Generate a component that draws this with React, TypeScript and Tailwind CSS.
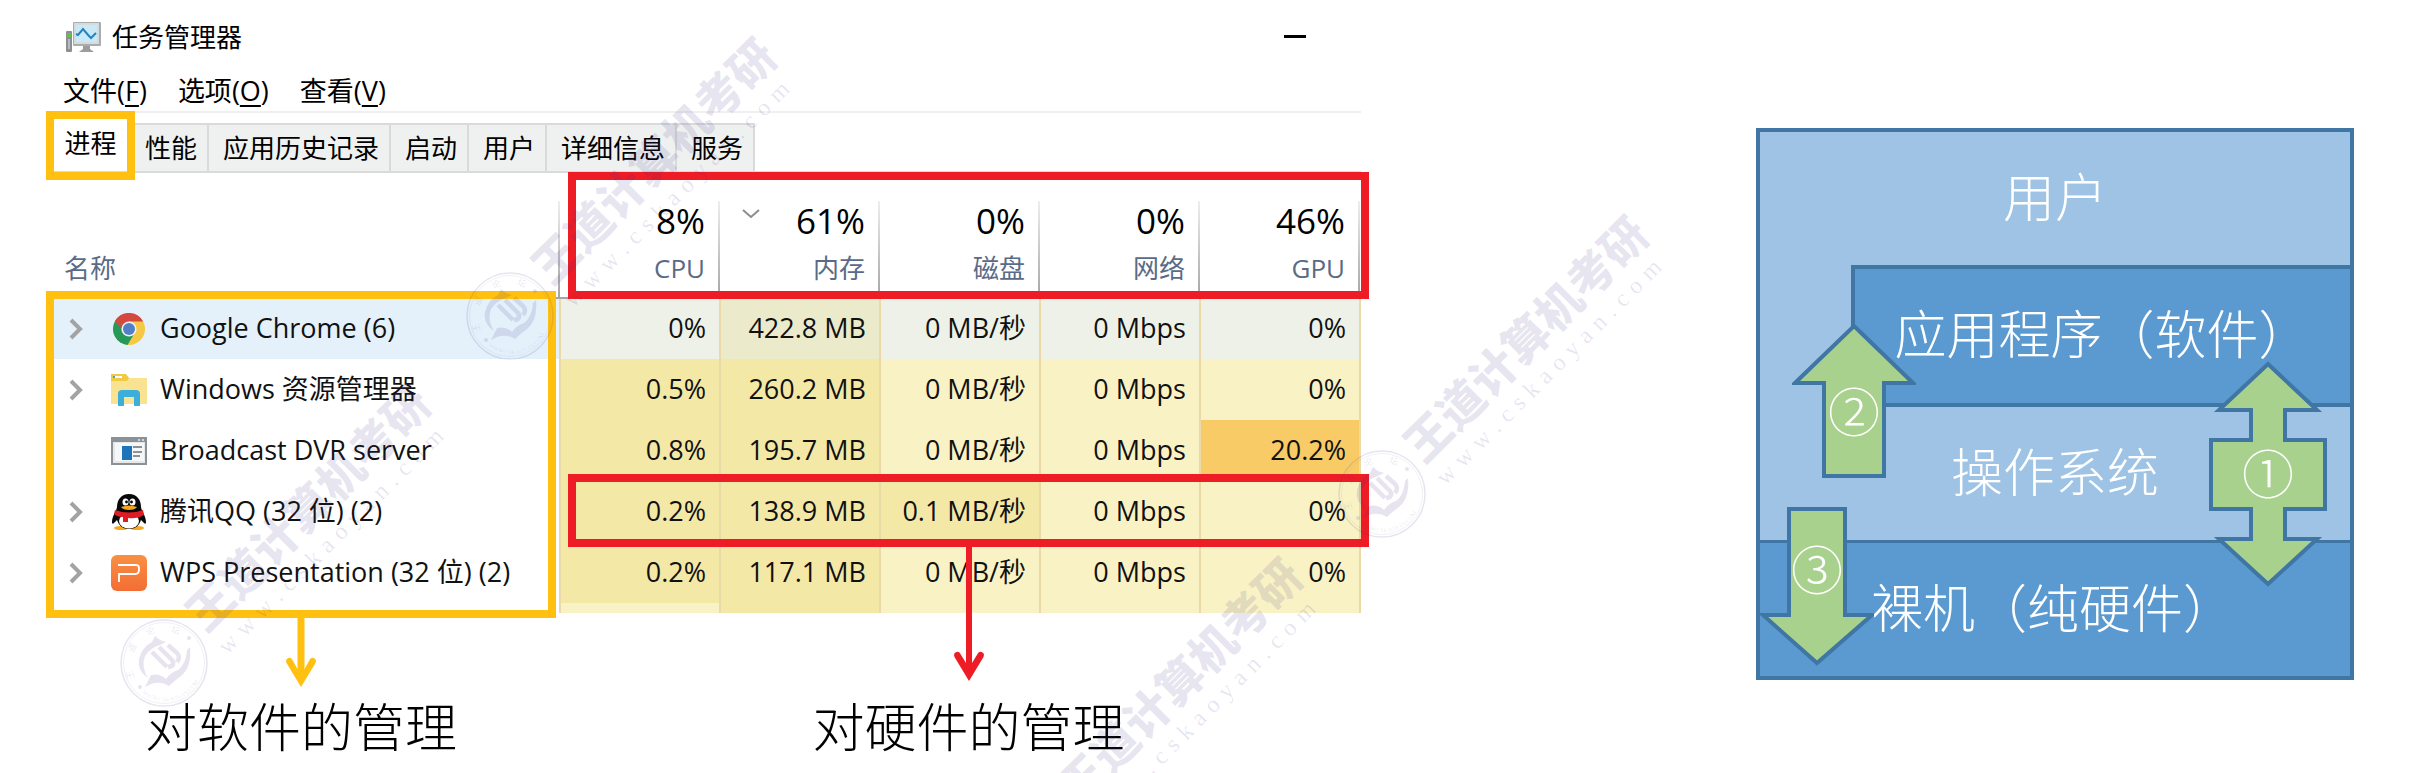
import type { ReactNode } from "react";

type Tone = "low" | "mid" | "high" | "hoverLow" | "hoverMid";

interface Process {
  name: string;
  icon: ReactNode;
  expandable: boolean;
  selected?: boolean;
  cells: { value: string; tone: Tone }[];
}

const toneClass: Record<Tone, string> = {
  low: "bg-[#f9f2c4]",
  mid: "bg-[#f4e8a6]",
  high: "bg-[#f8cb66]",
  hoverLow: "bg-[#edf1e7]",
  hoverMid: "bg-[#ebeacb]",
};

function TaskManagerIcon() {
  return (
    <svg viewBox="0 0 36 32" className="h-8 w-9" aria-hidden="true">
      <rect x="1" y="10" width="6" height="21" rx="1" fill="#8d9092" />
      <rect x="2" y="12" width="4" height="4" fill="#5fc04a" />
      <rect x="3" y="18" width="2" height="10" fill="#b9bcbe" />
      <rect x="8" y="1" width="28" height="24" rx="1" fill="#a9adaf" />
      <rect x="9" y="2" width="25" height="21" fill="#d7dadb" />
      <rect x="11" y="4" width="21" height="17" fill="#c9e9f8" />
      <path d="M11 13l2 1 5-6 6 7 2 2 5-5" fill="none" stroke="#2383bd" strokeWidth="2" />
      <path d="M18 25h7v3l4 3H14l4-3z" fill="#9a9d9f" />
    </svg>
  );
}

function ChromeIcon() {
  return (
    <svg viewBox="0 0 32 32" className="h-8 w-8" aria-hidden="true">
      <circle cx="16" cy="16" r="16" fill="#f6c944" />
      <path d="M16 16L2.1 8A16 16 0 0 0 14.5 31.9L22 19.5z" fill="#25995a" />
      <path d="M16 16L2.1 8A16 16 0 0 1 30.2 8.6H16z" fill="#d5483f" />
      <path d="M9 17L2.1 8A16 16 0 0 1 5 4.4z" fill="#d5483f" />
      <circle cx="16" cy="16" r="7.6" fill="#eef1f6" />
      <circle cx="16" cy="16" r="6" fill="#5280c8" />
    </svg>
  );
}

function FolderIcon() {
  return (
    <svg viewBox="0 0 36 32" className="h-8 w-9" aria-hidden="true">
      <path d="M0 0h15l3 4h18v26H0z" fill="#f9e393" />
      <path d="M0 0h15l3 4-2 3H0z" fill="#f1ca43" />
      <rect x="2" y="2" width="9" height="2" fill="#fff" />
      <rect x="2" y="2" width="2" height="2" fill="#35a5d6" />
      <path d="M7 32V20q0-4 4-4h14q4 0 4 4v12h-6v-9H13v9z" fill="#3bafda" />
    </svg>
  );
}

function ServerIcon() {
  return (
    <svg viewBox="0 0 36 28" className="h-7 w-9" aria-hidden="true">
      <rect width="36" height="28" fill="#8b9195" />
      <rect x="2" y="5" width="32" height="21" fill="#e6e8ea" />
      <rect x="4" y="6" width="29" height="18" fill="#f6f7f8" />
      <path d="M27 3h2M31 3h2" stroke="#d4d7d9" strokeWidth="2" />
      <rect x="11" y="9" width="10" height="14" fill="#1d74bd" />
      <path d="M22 10h9M22 15h9M22 19h7" stroke="#8c9195" strokeWidth="2" />
    </svg>
  );
}

function PenguinIcon() {
  return (
    <svg viewBox="0 0 34 36" className="h-9 w-[34px]" aria-hidden="true">
      <ellipse cx="9" cy="34" rx="7" ry="2" fill="#f5a81c" />
      <ellipse cx="25" cy="34" rx="7" ry="2" fill="#f5a81c" />
      <path d="M17 0C9 0 5 6 5 13c0 3-5 9-5 15 0 2 1 2 2 1l3-3c2 6 6 9 12 9s10-3 12-9l3 3c1 1 2 1 2-1 0-6-5-12-5-15C29 6 25 0 17 0z" fill="#090909" />
      <ellipse cx="17" cy="27" rx="10" ry="7.5" fill="#fff" />
      <path d="M3 16q14 5 28 0l1 5q-7 4-16 3v4h-5v-5q-6 0-9-3z" fill="#e01b24" />
      <ellipse cx="13.5" cy="8" rx="3" ry="3.5" fill="#fff" />
      <ellipse cx="20.500" cy="8" rx="3" ry="3.5" fill="#fff" />
      <circle cx="14.500" cy="8" r="1.400" fill="#000" />
      <circle cx="19.500" cy="8" r="1.400" fill="#000" />
      <path d="M9 13q8-3 16 0-2 3-8 3t-8-3z" fill="#f5a81c" />
    </svg>
  );
}

function WpsIcon() {
  return (
    <svg viewBox="0 0 36 36" className="h-9 w-9" aria-hidden="true">
      <defs>
        <linearGradient id="wps" x1="0" y1="0" x2="0" y2="1">
          <stop offset="0" stopColor="#f99043" />
          <stop offset="1" stopColor="#f36d35" />
        </linearGradient>
      </defs>
      <rect width="36" height="36" rx="6" fill="url(#wps)" />
      <path d="M7 10h18q3 0 3 3v2q0 4-4 4H8v8" fill="none" stroke="#fff" strokeWidth="1.800" />
    </svg>
  );
}

const usage = [
  { label: "CPU", total: "8%" },
  { label: "内存", total: "61%", sorted: true },
  { label: "磁盘", total: "0%" },
  { label: "网络", total: "0%" },
  { label: "GPU", total: "46%" },
];

const processes: Process[] = [
  {
    name: "Google Chrome (6)",
    icon: <ChromeIcon />,
    expandable: true,
    selected: true,
    cells: [
      { value: "0%", tone: "hoverLow" },
      { value: "422.8 MB", tone: "hoverMid" },
      { value: "0 MB/秒", tone: "hoverLow" },
      { value: "0 Mbps", tone: "hoverLow" },
      { value: "0%", tone: "hoverLow" },
    ],
  },
  {
    name: "Windows 资源管理器",
    icon: <FolderIcon />,
    expandable: true,
    cells: [
      { value: "0.5%", tone: "mid" },
      { value: "260.2 MB", tone: "mid" },
      { value: "0 MB/秒", tone: "low" },
      { value: "0 Mbps", tone: "low" },
      { value: "0%", tone: "low" },
    ],
  },
  {
    name: "Broadcast DVR server",
    icon: <ServerIcon />,
    expandable: false,
    cells: [
      { value: "0.8%", tone: "mid" },
      { value: "195.7 MB", tone: "mid" },
      { value: "0 MB/秒", tone: "low" },
      { value: "0 Mbps", tone: "low" },
      { value: "20.2%", tone: "high" },
    ],
  },
  {
    name: "腾讯QQ (32 位) (2)",
    icon: <PenguinIcon />,
    expandable: true,
    cells: [
      { value: "0.2%", tone: "mid" },
      { value: "138.9 MB", tone: "mid" },
      { value: "0.1 MB/秒", tone: "mid" },
      { value: "0 Mbps", tone: "low" },
      { value: "0%", tone: "low" },
    ],
  },
  {
    name: "WPS Presentation (32 位) (2)",
    icon: <WpsIcon />,
    expandable: true,
    cells: [
      { value: "0.2%", tone: "mid" },
      { value: "117.1 MB", tone: "mid" },
      { value: "0 MB/秒", tone: "low" },
      { value: "0 Mbps", tone: "low" },
      { value: "0%", tone: "low" },
    ],
  },
];

const menus = [
  { label: "文件", hotkey: "F" },
  { label: "选项", hotkey: "O" },
  { label: "查看", hotkey: "V" },
];

const tabs = ["性能", "应用历史记录", "启动", "用户", "详细信息", "服务"];

const nextRowTones: Tone[] = ["low", "mid", "low", "low", "low"];

function ProcessTable() {
  return (
    <table className="mt-7 w-full table-fixed border-collapse">
      <colgroup>
        <col />
        {usage.map((u) => (
          <col key={u.label} className="w-40" />
        ))}
      </colgroup>
      <thead>
        <tr className="h-[97px] align-top">
          <th
            scope="col"
            className="border-b-2 border-[#a5a5a5] bg-[linear-gradient(#eeeeee,#a5a5a5)] bg-[length:2px_100%] bg-right bg-no-repeat pt-[49px] pl-[18px] text-left leading-9 font-normal text-[#5a6b87]"
          >
            名称
          </th>
          {usage.map((u) => (
            <th
              key={u.label}
              scope="col"
              className="relative border-b-2 border-[#a5a5a5] bg-[linear-gradient(#eeeeee,#a5a5a5)] bg-[length:2px_100%] bg-right bg-no-repeat pr-[15px] text-right font-normal"
            >
              {u.sorted && (
                <svg viewBox="0 0 18 10" className="absolute top-2 left-[22px] h-[10px] w-[18px]" aria-hidden="true">
                  <path d="M1 1l8 7 8-7" fill="none" stroke="#8c8c8c" strokeWidth="2" />
                </svg>
              )}
              <span className="block text-[35px] leading-10 text-black">{u.total}</span>
              <span className="mt-[9px] block leading-9 text-[#5a6b87]">{u.label}</span>
            </th>
          ))}
        </tr>
      </thead>
      <tbody className="text-[27px]">
        {processes.map((p) => (
          <tr key={p.name} className={p.selected ? "h-[61px] bg-[#e4f1fb]" : "h-[61px]"}>
            <td className="p-0 pl-[22px]">
              <div className="flex items-center">
                <span className="w-[43px]">
                  {p.expandable && (
                    <button type="button" aria-label={`展开 ${p.name}`} className="block">
                      <svg viewBox="0 0 16 22" className="h-[22px] w-4" aria-hidden="true">
                        <path d="M3 2l9 9-9 9" fill="none" stroke="#a3a3a3" strokeWidth="4" />
                      </svg>
                    </button>
                  )}
                </span>
                <span className="flex w-9 justify-center">{p.icon}</span>
                <span className="ml-[13px] pb-[2px] whitespace-nowrap">{p.name}</span>
              </div>
            </td>
            {p.cells.map((c, i) => (
              <td
                key={usage[i].label}
                className={`border-x-2 border-[#ebd9a8] p-0 pr-[13px] pb-[2px] text-right whitespace-nowrap ${toneClass[c.tone]}`}
              >
                {c.value}
              </td>
            ))}
          </tr>
        ))}
        <tr className="h-[10px]" aria-hidden="true">
          <td className="p-0" />
          {nextRowTones.map((t, i) => (
            <td key={usage[i].label} className={`border-x-2 border-[#ebd9a8] p-0 ${toneClass[t]}`} />
          ))}
        </tr>
      </tbody>
    </table>
  );
}

function TaskManager() {
  return (
    <section aria-label="任务管理器" className="relative text-[26px] leading-9 text-[#111111]">
      <div className="pr-2">
        <header className="flex h-[73px] items-center pr-[55px] pl-[19px]">
          <TaskManagerIcon />
          <h1 className="ml-[11px] flex-1 text-black">任务管理器</h1>
          <button type="button" aria-label="最小化" className="flex h-9 w-[22px] items-center">
            <span className="h-[3px] w-full bg-black" />
          </button>
        </header>
        <nav className="flex h-[40px] items-start gap-[31px] border-b-2 border-[#f0f0f0] pl-[17px] text-[27px]">
          {menus.map((m) => (
            <button key={m.hotkey} type="button" className="whitespace-nowrap text-black">
              {m.label}(<span className="underline underline-offset-4">{m.hotkey}</span>)
            </button>
          ))}
        </nav>
        <div role="tablist" className="mt-[10px] flex h-[50px] border-b-2 border-[#d9dbdb] text-black">
          <button type="button" role="tab" aria-selected="true" className="w-[85px] pb-2 pl-1">
            进程
          </button>
          {tabs.map((t) => (
            <button
              key={t}
              type="button"
              role="tab"
              aria-selected="false"
              className="border-t-2 border-r-2 border-[#d9dbdb] bg-[#eff1f1] pr-[10px] pl-[14px] whitespace-nowrap"
            >
              {t}
            </button>
          ))}
        </div>
        <ProcessTable />
      </div>

      <div className="absolute top-[111px] left-0 h-[69px] w-[89px] border-8 border-[#ffc010]" />
      <div className="absolute top-[291px] right-[813px] left-0 h-[327px] border-8 border-[#ffc010]" />
      <div className="absolute top-[172px] right-0 h-[127px] w-[801px] border-8 border-[#ee1c25]" />
      <div className="absolute top-[474px] right-0 h-[73px] w-[801px] border-8 border-[#ee1c25]" />

      <div className="grid grid-cols-[1fr_801px] gap-3 pt-[5px] text-[52px] leading-[64px] font-light text-black">
        <p className="flex flex-col items-center gap-2">
          <svg viewBox="0 0 32 69" className="h-[69px] w-8" aria-hidden="true">
            <path d="M16 0v52" stroke="#ffc010" strokeWidth="7" />
            <path d="M1.500 45Q0 41 3.500 40Q6 39 7.500 42L12.500 51h7L24.500 42Q26 39 28.500 40Q32 41 30.500 45L16 69z" fill="#ffc010" />
          </svg>
          对软件的管理
        </p>
        <p className="relative flex flex-col items-center pt-[77px]">
          <svg viewBox="0 0 32 134" className="absolute -top-[71px] h-[134px] w-8" aria-hidden="true">
            <path d="M16 0v117" stroke="#ee1c25" strokeWidth="6" />
            <path d="M1.500 110Q0 106 3.500 105Q6 104 7.500 107L13 116h6L24.500 107Q26 104 28.500 105Q32 106 30.500 110L16 134z" fill="#ee1c25" />
          </svg>
          对硬件的管理
        </p>
      </div>
    </section>
  );
}

function SystemLayers() {
  return (
    <section
      aria-label="计算机系统层次"
      className="relative mt-32 self-start border-4 border-[#4076a3] bg-[#9ec3e5] text-center text-[52px] leading-[60px] font-light text-white"
    >
      <div className="flex h-[133px] items-center justify-center pb-1">用户</div>
      <div className="ml-[91px] flex h-[142px] items-center justify-center border-y-4 border-l-4 border-[#4076a3] bg-[#5b9ad1] pb-1">
        应用程序（软件）
      </div>
      <div className="flex h-[133px] items-center justify-center pb-1">操作系统</div>
      <div className="flex h-[136px] items-center border-t-[3px] border-[#4076a3] bg-[#5b9ad1] pb-1 pl-[111px]">
        裸机（纯硬件）
      </div>

      <div className="absolute top-[190px] left-[32px] flex h-[160px] w-[124px] items-center justify-center">
        <svg viewBox="0 0 124 160" className="absolute inset-0 h-full w-full" aria-hidden="true">
          <path d="M62 4L121 61H92V154H32V61H3z" fill="#a9d18e" stroke="#4076a3" strokeWidth="4" />
        </svg>
        <span className="relative pt-5">②</span>
      </div>
      <div className="absolute top-[374px] left-0 flex h-[160px] w-[114px] items-center justify-center">
        <svg viewBox="0 0 114 160" className="absolute inset-0 h-full w-full" aria-hidden="true">
          <path d="M29 3H85V109H112L57 157L3 109H29z" fill="#a9d18e" stroke="#4076a3" strokeWidth="4" />
        </svg>
        <span className="relative pb-8">③</span>
      </div>
      <div className="absolute top-[228px] right-[22px] flex h-[228px] w-[120px] items-center justify-center">
        <svg viewBox="0 0 120 228" className="absolute inset-0 h-full w-full" aria-hidden="true">
          <path
            d="M60 4L109 50H77V80H117V149H77V179H109L60 224L11 179H43V149H3V80H43V50H11z"
            fill="#a9d18e"
            stroke="#4076a3"
            strokeWidth="4"
          />
        </svg>
        <span className="relative">①</span>
      </div>
    </section>
  );
}

const ring = [
  { ch: "王", x: -34, y: 12, r: -105 },
  { ch: "道", x: -32, y: -15, r: -65 },
  { ch: "论", x: -14, y: -32, r: -24 },
  { ch: "坛", x: 12, y: -33, r: 20 },
];

function Seal() {
  return (
    <svg viewBox="-44 -44 88 88" className="h-[88px] w-[88px]" aria-hidden="true">
      <defs>
        <path id="seal-arc" d="M-22 30A37 37 0 0 0 36 -12" />
      </defs>
      <circle r="43" fill="none" stroke="currentColor" strokeWidth="1.500" />
      <circle r="40.500" fill="none" stroke="currentColor" strokeWidth=".6" />
      <path d="M-9 -27L-4 -23L2 -21L-4 -18Q-14 -15 -19 -7Q-23 4 -16 15Q-27 8 -25 -4Q-22 -16 -12 -21z" fill="currentColor" />
      <path
        d="M-12 -11L3 4M-5 -16L6 -5Q11 -1 8 3L4 4M4 -18L13 -10Q17 -6 13 -1"
        fill="none"
        stroke="currentColor"
        strokeWidth="4.500"
        strokeLinejoin="round"
      />
      <path d="M-19 24L-13 12Q-4 10 2 16Q7 9 14 7Q22 1 23 -13L26 -16Q28 4 17 13Q10 18 5 23Q-6 16 -19 24z" fill="currentColor" />
      <circle cx="-24" cy="24" r="2" fill="currentColor" />
      <circle cx="25" cy="-25" r="2" fill="currentColor" />
      {ring.map((c) => (
        <text
          key={c.ch}
          transform={`translate(${c.x} ${c.y}) rotate(${c.r})`}
          textAnchor="middle"
          dominantBaseline="central"
          fontSize="9"
          fill="currentColor"
        >
          {c.ch}
        </text>
      ))}
      <text fontSize="6" fill="currentColor" fontFamily="Liberation Serif, serif">
        <textPath href="#seal-arc">WWW.CSKAOYAN.COM</textPath>
      </text>
    </svg>
  );
}

const site = Array.from("www.cskaoyan.com");

function Watermark({ className }: { className: string }) {
  return (
    <div className={`absolute h-[88px] w-[88px] text-[#46328c]/13 ${className}`}>
      <Seal />
      <div className="absolute top-[-24px] left-[84px] flex h-[74px] w-[330px] origin-left -rotate-45 flex-col justify-between">
        <div className="text-[46px] leading-[44px] font-black whitespace-nowrap">王道计算机考研</div>
        <div className="flex w-[308px] justify-between font-['Liberation_Serif',serif] text-[24px] leading-6">
          {site.map((c, i) => (
            <span key={i}>{c}</span>
          ))}
        </div>
      </div>
    </div>
  );
}

export default function App() {
  return (
    <main className="relative min-h-screen overflow-hidden bg-white font-['Open_Sans','Noto_Sans_CJK_SC',sans-serif]">
      <div className="grid grid-cols-[1323fr_598fr] gap-[387px] pr-[65px] pl-[46px]">
        <TaskManager />
        <SystemLayers />
      </div>
      <div aria-hidden="true" className="pointer-events-none absolute inset-0 overflow-hidden">
        <Watermark className="top-[272px] left-[466px]" />
        <Watermark className="top-[619px] left-[120px]" />
        <Watermark className="top-[450px] left-[1338px]" />
        <Watermark className="top-[792px] left-[992px]" />
      </div>
    </main>
  );
}
